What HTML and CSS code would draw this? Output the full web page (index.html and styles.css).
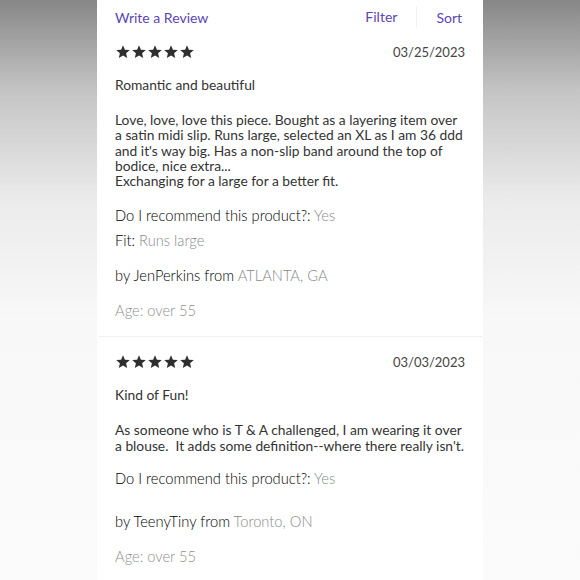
FILE: index.html
```html
<!DOCTYPE html>
<html>
<head>
  <title>Reviews</title>
  <link rel="stylesheet" href="styles.css">
</head>
<body>
  <div id="card">
    <div class="toolbar">
      <a class="link" href="#">Write a Review</a>
      <div class="tools">
        <a class="link filter" href="#">Filter</a>
        <a class="link sort" href="#">Sort</a>
      </div>
    </div>

    <div class="review">
      <div class="review-head">
        <div class="stars">
          <svg viewBox="0 0 16 16"><path d="M8 1.2l1.9 4.5 4.9.4-3.7 3.2 1.1 4.8L8 11.6l-4.2 2.5 1.1-4.8L1.2 6.1l4.9-.4z"/></svg>
          <svg viewBox="0 0 16 16"><path d="M8 1.2l1.9 4.5 4.9.4-3.7 3.2 1.1 4.8L8 11.6l-4.2 2.5 1.1-4.8L1.2 6.1l4.9-.4z"/></svg>
          <svg viewBox="0 0 16 16"><path d="M8 1.2l1.9 4.5 4.9.4-3.7 3.2 1.1 4.8L8 11.6l-4.2 2.5 1.1-4.8L1.2 6.1l4.9-.4z"/></svg>
          <svg viewBox="0 0 16 16"><path d="M8 1.2l1.9 4.5 4.9.4-3.7 3.2 1.1 4.8L8 11.6l-4.2 2.5 1.1-4.8L1.2 6.1l4.9-.4z"/></svg>
          <svg viewBox="0 0 16 16"><path d="M8 1.2l1.9 4.5 4.9.4-3.7 3.2 1.1 4.8L8 11.6l-4.2 2.5 1.1-4.8L1.2 6.1l4.9-.4z"/></svg>
        </div>
        <span class="date">03/25/2023</span>
      </div>
      <h3 class="title">Romantic and beautiful</h3>
      <p class="text">Love, love, love this piece. Bought as a layering item over<br>a satin midi slip. Runs large, selected an XL as I am 36 ddd<br>and it's way big. Has a non-slip band around the top of<br>bodice, nice extra...<br>Exchanging for a large for a better fit.</p>
      <div class="field">Do I recommend this product?: <span class="value">Yes</span></div>
      <div class="field fit">Fit: <span class="value">Runs large</span></div>
      <div class="field author">by JenPerkins from <span class="value">ATLANTA, GA</span></div>
      <div class="age">Age: over 55</div>
    </div>

    <div class="review">
      <div class="review-head">
        <div class="stars">
          <svg viewBox="0 0 16 16"><path d="M8 1.2l1.9 4.5 4.9.4-3.7 3.2 1.1 4.8L8 11.6l-4.2 2.5 1.1-4.8L1.2 6.1l4.9-.4z"/></svg>
          <svg viewBox="0 0 16 16"><path d="M8 1.2l1.9 4.5 4.9.4-3.7 3.2 1.1 4.8L8 11.6l-4.2 2.5 1.1-4.8L1.2 6.1l4.9-.4z"/></svg>
          <svg viewBox="0 0 16 16"><path d="M8 1.2l1.9 4.5 4.9.4-3.7 3.2 1.1 4.8L8 11.6l-4.2 2.5 1.1-4.8L1.2 6.1l4.9-.4z"/></svg>
          <svg viewBox="0 0 16 16"><path d="M8 1.2l1.9 4.5 4.9.4-3.7 3.2 1.1 4.8L8 11.6l-4.2 2.5 1.1-4.8L1.2 6.1l4.9-.4z"/></svg>
          <svg viewBox="0 0 16 16"><path d="M8 1.2l1.9 4.5 4.9.4-3.7 3.2 1.1 4.8L8 11.6l-4.2 2.5 1.1-4.8L1.2 6.1l4.9-.4z"/></svg>
        </div>
        <span class="date">03/03/2023</span>
      </div>
      <h3 class="title">Kind of Fun!</h3>
      <p class="text">As someone who is T &amp; A challenged, I am wearing it over a blouse.&nbsp; It adds some definition--where there really isn't.</p>
      <div class="field near">Do I recommend this product?: <span class="value">Yes</span></div>
      <div class="field author far">by TeenyTiny from <span class="value">Toronto, ON</span></div>
      <div class="age">Age: over 55</div>
    </div>
  </div>
</body>
</html>
```

FILE: styles.css
```css
html, body {
  height: 100%;
}

body {
  margin: 0;
  background: linear-gradient(to bottom, #878787 0px, #c4c4c4 90px, #ebebeb 200px, #f8f8f8 320px, #fbfbfb 580px);
  font-family: Lato, "Open Sans", sans-serif;
  color: #333;
  overflow: hidden;
}

#card {
  width: 350px;
  min-height: 100%;
  margin: 0 auto;
  padding: 0 18px;
  background: #fff;
}

.toolbar {
  display: flex;
  justify-content: space-between;
  align-items: center;
  height: 34px;
}

.link {
  color: #5a46b6;
  text-decoration: none;
  font-size: 14px;
}

.tools {
  display: flex;
  align-items: center;
}

.filter {
  padding-right: 19px;
  border-right: 1px solid #f1f1f1;
  line-height: 22px;
}

.sort {
  padding-left: 19px;
  margin-right: 3px;
}

.review {
  padding-top: 8px;
  padding-bottom: 17px;
}

.review + .review {
  border-top: 1px solid #efefef;
  margin: 0 -17px;
  padding-left: 17px;
  padding-right: 17px;
  padding-top: 15px;
}

.review-head {
  display: flex;
  justify-content: space-between;
  align-items: center;
  height: 20px;
}

.stars {
  display: flex;
}

.stars svg {
  width: 16px;
  height: 16px;
  fill: #2f2f2f;
}

.date {
  font-size: 13px;
  color: #444;
}

.title {
  margin: 14px 0 0;
  font-size: 13.8px;
  font-weight: 400;
  line-height: 18px;
}

.text {
  margin: 18px 0 0;
  font-size: 13.8px;
  line-height: 15.3px;
}

.field {
  margin-top: 18px;
  font-size: 14.7px;
  font-weight: 300;
  color: #000;
  line-height: 18px;
}

.field.near {
  margin-top: 16px;
}

.field.fit {
  margin-top: 7px;
}

.field.author {
  margin-top: 17px;
}

.field.author.far {
  margin-top: 25px;
}

.value {
  color: #8a8a8a;
}

.age {
  margin-top: 17px;
  font-size: 14.7px;
  font-weight: 300;
  color: #8f8f8f;
  line-height: 18px;
}
```
